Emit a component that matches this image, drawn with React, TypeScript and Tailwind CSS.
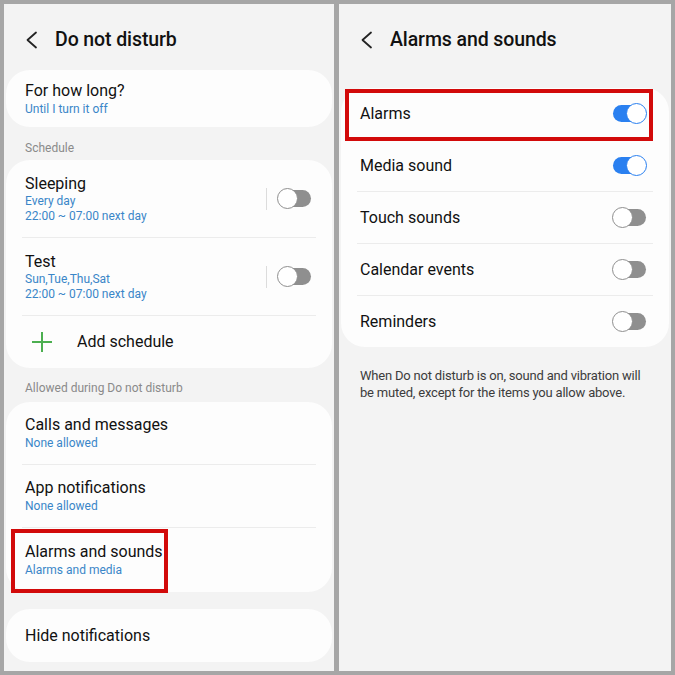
import React from "react";

const font = { fontFamily: "Roboto, 'Noto Sans', Arial, sans-serif" };

function Chevron() {
  return (
    <svg width="14" height="20" viewBox="0 0 14 20" className="shrink-0">
      <polyline points="11,2.5 2.5,10 11,17.5" fill="none" stroke="#222" strokeWidth="1.8" strokeLinecap="round" strokeLinejoin="round" />
    </svg>
  );
}

function Toggle({ on }: { on?: boolean }) {
  return (
    <div className="relative w-[35px] h-[21px] shrink-0">
      <div
        className={
          "absolute left-[1px] right-[1px] top-[2px] h-[17px] rounded-full " +
          (on ? "bg-[#2a80f0]" : "bg-[#8f8f8f]")
        }
      />
      <div
        className={
          "absolute top-0 w-[21px] h-[21px] rounded-full bg-white border-[1.5px] " +
          (on ? "right-0 border-[#2a80f0]" : "left-0 border-[#8f8f8f]")
        }
      />
    </div>
  );
}

function Header({ title }: { title: string }) {
  return (
    <div className="h-[66px] pt-[6px] flex items-center gap-[16px] pl-[19px]">
      <Chevron />
      <span className="text-[19.5px] font-medium text-[#111] tracking-[-0.1px]">{title}</span>
    </div>
  );
}

function Divider() {
  return <div className="h-px bg-[#ececec] mx-[16px]" />;
}

function ScheduleRow({ title, lines }: { title: string; lines: string[] }) {
  return (
    <div className="h-[77px] flex items-center pl-[19px] pr-[20px]">
      <div className="flex-1 flex flex-col">
        <span className="text-[16px] leading-[20px] text-[#111]">{title}</span>
        {lines.map((l) => (
          <span key={l} className="text-[12px] leading-[15px] text-[#3a86c8]">
            {l}
          </span>
        ))}
      </div>
      <div className="w-px h-[22px] bg-[#dcdcdc] mr-[10px]" />
      <Toggle />
    </div>
  );
}

function InfoRow({ title, sub, h, children }: { title: string; sub: string; h: string; children?: React.ReactNode }) {
  return (
    <div className={"relative flex flex-col justify-center pl-[19px] " + h}>
      <span className="text-[16px] leading-[20px] text-[#111]">{title}</span>
      <span className="text-[12px] leading-[16px] text-[#3a86c8]">{sub}</span>
      {children}
    </div>
  );
}

function SoundRow({ label, on }: { label: string; on?: boolean }) {
  return (
    <div className="h-[51px] flex items-center justify-between pl-[19px] pr-[22px]">
      <span className="text-[16px] text-[#111]">{label}</span>
      <Toggle on={on} />
    </div>
  );
}

export default function App() {
  return (
    <div className="w-[675px] h-[675px] bg-[#a6a6a6] p-[4px] flex gap-[5px]" style={font}>
      {/* Left panel */}
      <div className="w-[330px] bg-[#f3f3f3] flex flex-col px-[2px]">
        <Header title="Do not disturb" />

        <div className="bg-[#fdfdfd] rounded-[24px] h-[57px] flex flex-col justify-center pl-[19px]">
          <span className="text-[16px] leading-[20px] text-[#111]">For how long?</span>
          <span className="text-[12px] leading-[16px] text-[#3a86c8]">Until I turn it off</span>
        </div>

        <div className="pt-[14px] pb-[5px] pl-[19px] text-[12px] leading-[14px] text-[#8a8a8a]">Schedule</div>

        <div className="bg-[#fdfdfd] rounded-[24px] flex flex-col">
          <ScheduleRow title="Sleeping" lines={["Every day", "22:00 ~ 07:00 next day"]} />
          <Divider />
          <ScheduleRow title="Test" lines={["Sun,Tue,Thu,Sat", "22:00 ~ 07:00 next day"]} />
          <Divider />
          <div className="h-[52px] flex items-center pl-[25px] gap-[24px]">
            <svg width="22" height="22" viewBox="0 0 22 22">
              <path d="M11 1v20M1 11h20" stroke="#4caf50" strokeWidth="2" />
            </svg>
            <span className="text-[16px] text-[#111]">Add schedule</span>
          </div>
        </div>

        <div className="pt-[13px] pb-[7px] pl-[19px] text-[12px] leading-[14px] text-[#8a8a8a]">
          Allowed during Do not disturb
        </div>

        <div className="bg-[#fdfdfd] rounded-[24px] flex flex-col">
          <InfoRow title="Calls and messages" sub="None allowed" h="h-[62px]" />
          <Divider />
          <InfoRow title="App notifications" sub="None allowed" h="h-[62px]" />
          <Divider />
          <InfoRow title="Alarms and sounds" sub="Alarms and media" h="h-[64px]">
            <div className="absolute left-[5px] top-[1px] w-[157px] h-[64px] border-[4px] border-[#d20a0a]" />
          </InfoRow>
        </div>

        <div className="mt-[17px] bg-[#fdfdfd] rounded-[24px] h-[53px] flex items-center pl-[19px]">
          <span className="text-[16px] text-[#111]">Hide notifications</span>
        </div>
      </div>

      {/* Right panel */}
      <div className="flex-1 bg-[#f3f3f3] flex flex-col px-[2px]">
        <Header title="Alarms and sounds" />

        <div className="relative mt-[18px] bg-[#fdfdfd] rounded-[24px] flex flex-col">
          <SoundRow label="Alarms" on />
          <Divider />
          <SoundRow label="Media sound" on />
          <Divider />
          <SoundRow label="Touch sounds" />
          <Divider />
          <SoundRow label="Calendar events" />
          <Divider />
          <SoundRow label="Reminders" />
          <div className="absolute left-[4px] top-[1px] w-[308px] h-[52px] border-[4px] border-[#d20a0a]" />
        </div>

        <p className="mt-[20px] pl-[19px] pr-[14px] text-[13px] leading-[17px] tracking-[-0.2px] text-[#3c3c3c]">
          When Do not disturb is on, sound and vibration will be muted, except for the items you allow above.
        </p>
      </div>
    </div>
  );
}
